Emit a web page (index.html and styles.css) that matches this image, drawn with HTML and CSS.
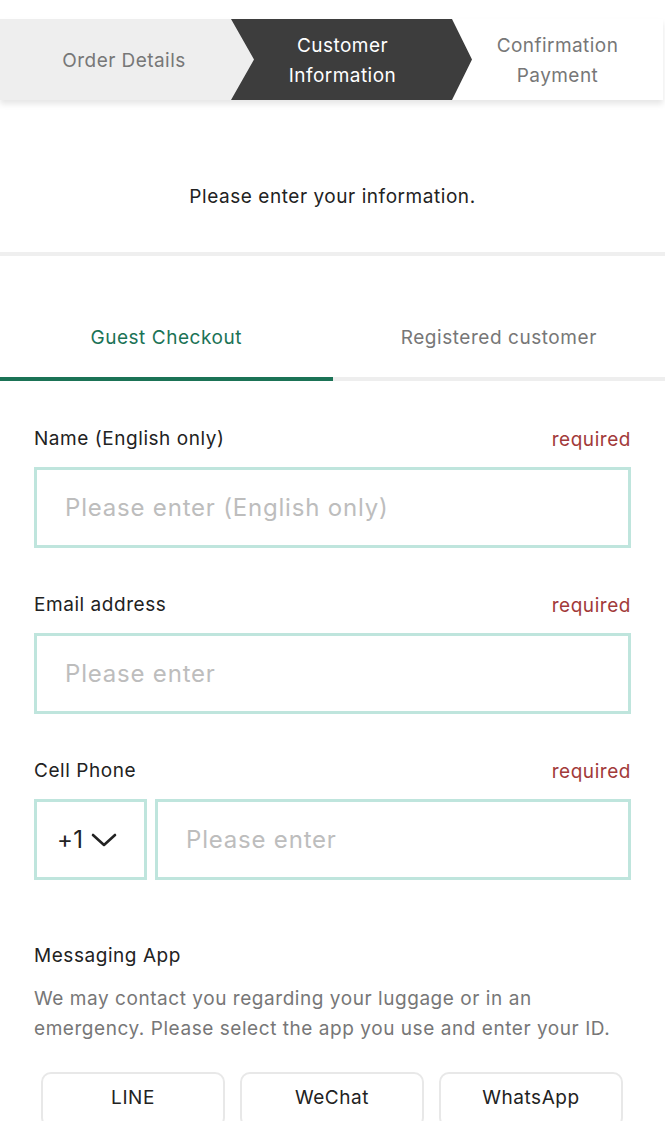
FILE: index.html
```html
<!DOCTYPE html>
<html lang="en">
<head>
<meta charset="utf-8">
<title>Customer Information</title>
<link rel="stylesheet" href="styles.css">
</head>
<body>
<div class="stepper">
  <div class="step step-done"><span>Order Details</span></div>
  <div class="step step-current"><span>Customer<br>Information</span></div>
  <div class="step step-next"><span>Confirmation<br>Payment</span></div>
</div>

<div class="intro">Please enter your information.</div>
<div class="divider"></div>

<div class="tabs">
  <div class="tab tab-active">Guest Checkout</div>
  <div class="tab">Registered customer</div>
</div>

<form class="form">
  <div class="field">
    <div class="label-row"><span class="label">Name (English only)</span><span class="req">required</span></div>
    <div class="input"><span class="ph">Please enter (English only)</span></div>
  </div>
  <div class="field">
    <div class="label-row"><span class="label">Email address</span><span class="req">required</span></div>
    <div class="input"><span class="ph">Please enter</span></div>
  </div>
  <div class="field">
    <div class="label-row"><span class="label">Cell Phone</span><span class="req">required</span></div>
    <div class="phone-row">
      <div class="input country"><span class="code">+1</span>
        <svg class="chev" width="26" height="16" viewBox="0 0 26 16"><path d="M2 3 L13 13 L24 3" fill="none" stroke="#222" stroke-width="2.6" stroke-linecap="round" stroke-linejoin="round"/></svg>
      </div>
      <div class="input phone"><span class="ph">Please enter</span></div>
    </div>
  </div>
  <div class="messaging">
    <div class="label">Messaging App</div>
    <p class="desc">We may contact you regarding your luggage or in an emergency. Please select the app you use and enter your ID.</p>
    <div class="apps">
      <div class="app">LINE</div>
      <div class="app">WeChat</div>
      <div class="app">WhatsApp</div>
    </div>
  </div>
</form>
</body>
</html>
```
FILE: styles.css
```css
* { box-sizing: border-box; }
html, body { margin: 0; padding: 0; background: #fff; }
body {
  font-family: Inter, "Liberation Sans", Arial, sans-serif;
  color: #222;
  width: 665px;
  overflow: hidden;
  font-size: 19px;
  letter-spacing: 0.55px;
}

.stepper {
  margin-top: 19px;
  height: 81px;
  display: flex;
  background: #fff;
  box-shadow: 0 4px 6px rgba(0,0,0,0.10);
  margin-right: 2px;
}
.step {
  height: 81px;
  display: flex;
  align-items: center;
  justify-content: center;
  text-align: center;
  font-size: 19px;
  letter-spacing: 0.45px;
  line-height: 30px;
  color: #777;
  padding-top: 2px;
}
.step-done {
  width: 254px;
  flex: none;
  background: #eeeeee;
  padding-right: 6px;
}
.step-current {
  width: 241px;
  flex: none;
  margin-left: -23px;
  background: #3d3d3d;
  color: #fff;
  clip-path: polygon(0 0, 221px 0, 100% 50%, 221px 100%, 0 100%, 23px 50%);
  padding-right: 18px;
}
.step-next {
  flex: 1;
  margin-left: -20px;
}

.intro {
  padding: 85px 0 43px;
  text-align: center;
  line-height: 24px;
  color: #222;
}
.divider {
  height: 4px;
  background: #efefef;
}

.tabs {
  display: flex;
}
.tab {
  flex: 1;
  text-align: center;
  line-height: 24px;
  padding: 70px 0 27px;
  color: #777;
  border-bottom: 4px solid #eeeeee;
}
.tab-active {
  color: #1b7356;
  border-bottom-color: #1b7356;
}

.form {
  margin: 0;
  padding: 0 34px;
}
.field { padding-top: 46px; }
.field + .field { padding-top: 45px; }
.label-row {
  display: flex;
  justify-content: space-between;
  align-items: center;
  height: 24px;
  margin-bottom: 16px;
}
.label {
  line-height: 24px;
  color: #222;
}
.req {
  color: #a23a3a;
}
.input {
  height: 81px;
  border: 3px solid #bfe5dd;
  display: flex;
  align-items: center;
  padding-left: 28px;
}
.ph {
  font-size: 24px;
  letter-spacing: 0.8px;
  color: #bdbdbd;
}
.phone-row {
  display: flex;
  gap: 8px;
}
.country {
  width: 113px;
  flex: none;
  padding-left: 20px;
  gap: 8px;
}
.code {
  font-size: 24px;
  letter-spacing: 0.3px;
  color: #222;
}
.phone { flex: 1; }

.messaging { padding-top: 64px; }
.desc {
  margin: 16px 0 0;
  line-height: 30px;
  color: #777;
}
.apps {
  display: flex;
  gap: 15px;
  margin: 28px 8px 0 7px;
}
.app {
  flex: 1;
  height: 56px;
  border: 2px solid #e8e8e8;
  border-radius: 10px;
  display: flex;
  align-items: center;
  justify-content: center;
  color: #222;
  padding-bottom: 6px;
}
```
